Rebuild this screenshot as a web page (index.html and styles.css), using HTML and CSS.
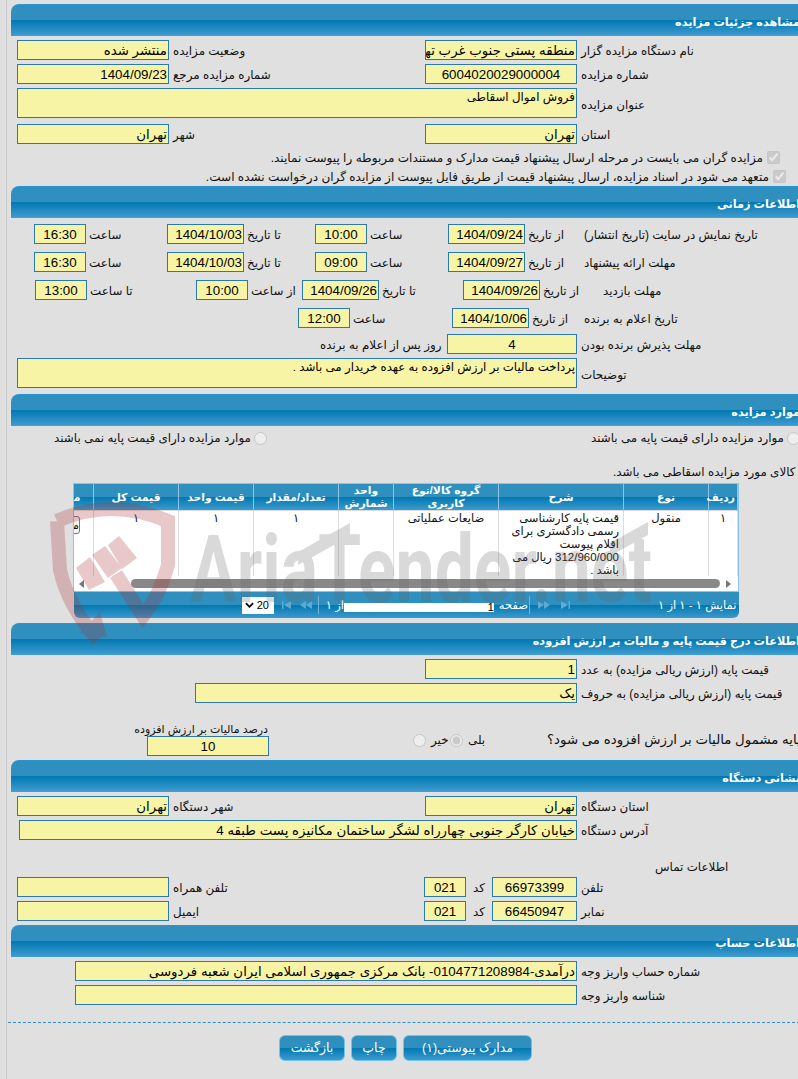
FILE: index.html
```html
<!DOCTYPE html>
<html lang="fa">
<head>
<meta charset="utf-8">
<title>مشاهده جزئیات مزایده</title>
<link rel="stylesheet" href="styles.css">
</head>
<body>
<div class="page">
<div class="sheet">

<section>
  <h2 class="head">مشاهده جزئیات مزایده</h2>
  <div class="row cols">
    <div class="f">منتشر شده</div><div class="lb">وضعیت مزایده</div>
    <div class="f">منطقه پستی جنوب غرب تهران</div><div class="lb">نام دستگاه مزایده گزار</div>
  </div>
  <div class="row cols">
    <div class="f">1404/09/23</div><div class="lb">شماره مزایده مرجع</div>
    <div class="f c">6004020029000004</div><div class="lb">شماره مزایده</div>
  </div>
  <div class="row wide">
    <div class="f ta">فروش اموال اسقاطی</div><div class="lb">عنوان مزایده</div>
  </div>
  <div class="row cols r4">
    <div class="f">تهران</div><div class="lb">شهر</div>
    <div class="f">تهران</div><div class="lb">استان</div>
  </div>
  <div class="chk chk1"><input type="checkbox" checked disabled><span>مزایده گران می بایست در مرحله ارسال پیشنهاد قیمت مدارک و مستندات مربوطه را پیوست نمایند.</span></div>
  <div class="chk chk2"><input type="checkbox" checked disabled><span>متعهد می شود در اسناد مزایده، ارسال پیشنهاد قیمت از طریق فایل پیوست از مزایده گران درخواست نشده است.</span></div>
</section>

<section class="s2">
  <h2 class="head">اطلاعات زمانی</h2>
  <div class="row t1">
    <div class="f c">16:30</div><div class="lb">ساعت</div>
    <div class="f">1404/10/03</div><div class="lb">تا تاریخ</div>
    <div class="f c">10:00</div><div class="lb">ساعت</div>
    <div class="f">1404/09/24</div><div class="lb">از تاریخ</div>
    <div class="lb">تاریخ نمایش در سایت (تاریخ انتشار)</div>
  </div>
  <div class="row t1 g8">
    <div class="f c">16:30</div><div class="lb">ساعت</div>
    <div class="f">1404/10/03</div><div class="lb">تا تاریخ</div>
    <div class="f c">09:00</div><div class="lb">ساعت</div>
    <div class="f">1404/09/27</div><div class="lb">از تاریخ</div>
    <div class="lb">مهلت ارائه پیشنهاد</div>
  </div>
  <div class="row t3 g8">
    <div class="f c">13:00</div><div class="lb">تا ساعت</div>
    <div class="f c">10:00</div><div class="lb">از ساعت</div>
    <div class="f">1404/09/26</div><div class="lb">تا تاریخ</div>
    <div class="f">1404/09/26</div><div class="lb">از تاریخ</div>
    <div class="lb">مهلت بازدید</div>
  </div>
  <div class="row t4 g8">
    <div class="f c">12:00</div><div class="lb">ساعت</div>
    <div class="f">1404/10/06</div><div class="lb">از تاریخ</div>
    <div class="lb">تاریخ اعلام به برنده</div>
  </div>
  <div class="row t5">
    <div class="lb">روز پس از اعلام به برنده</div>
    <div class="f c">4</div>
    <div class="lb">مهلت پذیرش برنده بودن</div>
  </div>
  <div class="row wide g4">
    <div class="f ta">پرداخت مالیات بر ارزش افزوده به عهده خریدار می باشد .</div><div class="lb">توضیحات</div>
  </div>
</section>

<section>
  <h2 class="head">موارد مزایده</h2>
  <div class="radios">
    <label class="opt"><input type="radio" disabled><span>موارد مزایده دارای قیمت پایه نمی باشند</span></label>
    <label class="opt"><input type="radio" disabled><span>موارد مزایده دارای قیمت پایه می باشند</span></label>
  </div>
  <p class="note">کالای مورد مزایده اسقاطی می باشد.</p>
  <div class="grid">
    <div class="gridclip">
      <table>
        <colgroup>
          <col class="w29"><col class="w85"><col class="w125"><col class="w105"><col class="w55"><col class="w85"><col class="w75"><col class="w85"><col class="w60">
        </colgroup>
        <thead>
          <tr><th>ردیف</th><th>نوع</th><th>شرح</th><th>گروه کالا/نوع کاربری</th><th>واحد شمارش</th><th>تعداد/مقدار</th><th>قیمت واحد</th><th>قیمت کل</th><th>مدارک</th></tr>
        </thead>
        <tbody>
          <tr>
            <td>۱</td><td>منقول</td>
            <td class="desc">قیمت پایه کارشناسی رسمی دادگستری برای اقلام پیوست 312/960/000 ریال می باشد .</td>
            <td>ضایعات عملیاتی</td><td></td><td>۱</td><td>۱</td><td>۱</td>
            <td class="docs"><span class="docbtn">مدارک</span></td>
          </tr>
        </tbody>
      </table>
    </div>
    <div class="scroll">
      <span class="arr arr-l"></span><span class="thumb"></span><span class="arr arr-r"></span>
    </div>
  </div>
  <div class="pager">
    <div class="p-select"><svg class="chev" viewBox="0 0 10 6" aria-hidden="true"><path d="M1 1l4 4 4-4"/></svg><span>20</span></div>
    <div class="p-icons p-i1">
      <svg viewBox="0 0 10 8" aria-hidden="true"><path d="M0 0h1.500v8H0zM2 4l7-4v8z"/></svg>
      <svg class="dbl" viewBox="0 0 12 8" aria-hidden="true"><path d="M0 4l6-4v8zM6 4l6-4v8z"/></svg>
    </div>
    <i class="sep sep1"></i>
    <span class="p-of">از ۱</span>
    <div class="p-input">1</div>
    <span class="p-page">صفحه</span>
    <i class="sep sep2"></i>
    <div class="p-icons p-i2">
      <svg class="dbl" viewBox="0 0 12 8" aria-hidden="true"><path d="M6 4L0 0v8zM12 4L6 0v8z"/></svg>
      <svg viewBox="0 0 10 8" aria-hidden="true"><path d="M8 4L1 0v8zM8.500 0H10v8H8.500z"/></svg>
    </div>
    <span class="p-info">نمایش ۱ - ۱ از ۱</span>
  </div>
</section>

<section class="s4">
  <h2 class="head">اطلاعات درج قیمت پایه و مالیات بر ارزش افزوده</h2>
  <div class="row base1">
    <div class="f">1</div><div class="lb">قیمت پایه (ارزش ریالی مزایده) به عدد</div>
  </div>
  <div class="row base2">
    <div class="f">یک</div><div class="lb">قیمت پایه (ارزش ریالی مزایده) به حروف</div>
  </div>
  <div class="tax">
    <div class="taxcol">
      <div class="taxlb">درصد مالیات بر ارزش افزوده</div>
      <div class="f c">10</div>
    </div>
    <div class="yn">
      <input type="radio" disabled><span class="no">خیر</span>
      <input type="radio" checked disabled><span class="yes">بلی</span>
    </div>
    <div class="taxq">قیمت پایه مشمول مالیات بر ارزش افزوده می شود؟</div>
  </div>
</section>

<section>
  <h2 class="head">نشانی دستگاه</h2>
  <div class="row cols">
    <div class="f">تهران</div><div class="lb">شهر دستگاه</div>
    <div class="f">تهران</div><div class="lb">استان دستگاه</div>
  </div>
  <div class="row addr">
    <div class="f">خیابان کارگر جنوبی چهارراه لشگر ساختمان مکانیزه پست طبقه 4</div><div class="lb">آدرس دستگاه</div>
  </div>
  <div class="contact">اطلاعات تماس</div>
  <div class="row tel">
    <div class="f"></div><div class="lb">تلفن همراه</div>
    <div class="f c">021</div><div class="lb">کد</div>
    <div class="f c">66973399</div><div class="lb">تلفن</div>
  </div>
  <div class="row tel">
    <div class="f"></div><div class="lb">ایمیل</div>
    <div class="f c">021</div><div class="lb">کد</div>
    <div class="f c">66450947</div><div class="lb">نمابر</div>
  </div>
</section>

<section>
  <h2 class="head">اطلاعات حساب</h2>
  <div class="row acc">
    <div class="f">درآمدی-0104771208984- بانک مرکزی جمهوری اسلامی ایران شعبه فردوسی</div><div class="lb">شماره حساب واریز وجه</div>
  </div>
  <div class="row acc">
    <div class="f"></div><div class="lb">شناسه واریز وجه</div>
  </div>
</section>

<div class="actions">
  <a class="btn b1">بازگشت</a>
  <a class="btn b2">چاپ</a>
  <a class="btn b3">مدارک پیوستی(۱)</a>
</div>

</div>

<svg class="wm" viewBox="0 0 798 1079" aria-hidden="true">
  <g class="wm-red">
    <path class="wm-line" d="M57 521Q110 497 168 521V565Q160 595 143 616L116 574M57 521L60 570Q68 606 98 640"/>
    <path class="wm-fill" d="M80 633L107 637L100 612ZM76 568L90 557L105 582L89 590ZM92 555L105 546L122 568L108 578ZM108 545L119 536L137 558L122 569Z"/>
  </g>
  <g class="wm-grey">
    <text class="wm-text" x="190" y="602" textLength="462" lengthAdjust="spacingAndGlyphs">AriaTender.net</text>
    <path class="wm-bar" d="M298 552L350 523V536L298 565ZM610 543L648 522V535L610 556Z"/>
  </g>
</svg>
</div>
</body>
</html>
```
FILE: styles.css
```css
* { box-sizing: border-box; }
html, body { margin: 0; padding: 0; height: 100%; background: #e0e0e0; }
body { overflow: hidden; font-family: "Liberation Sans", "DejaVu Sans", sans-serif; font-size: 11.9px; color: #111; }

.page { position: relative; width: 798px; height: 1079px; overflow: hidden; background: #e0e0e0; }
.page::before { content: ""; position: absolute; left: 6px; top: 0; bottom: 0; width: 1px; background: #c9c9c9; }
.sheet { width: 815px; padding-top: 4px; }

.head {
  height: 32px; margin: 0 0 4px 11px; padding: 9px 15px 0 0;
  direction: rtl; font-size: 11.3px; font-weight: bold; line-height: 16px; color: #fff;
  border-radius: 8px 0 0 0;
  border-top: 1px solid #2a93d2; border-bottom: 1px solid #3d9fd8;
  background: linear-gradient(#2f8fbf 0, #2f8fbf 50%, #0078b0 50%, #3c9ace 100%);
}

.row { display: grid; padding-left: 17px; }
.f {
  height: 20px; padding: 0 1px; border: 1px solid #2a7aad; background: #f7f5a5;
  direction: rtl; text-align: right; white-space: nowrap; overflow: hidden;
  font-size: 13.33px; line-height: 19px; color: #000;
}
.f.c { text-align: center; }
.f.ta { height: 30px; font-size: 11.8px; line-height: 16px; }
.lb { direction: rtl; text-align: left; padding: 2px 0 0 4px; white-space: nowrap; line-height: 18px; }

.cols { grid-template-columns: 152px 256px 152px 1fr; margin-bottom: 4px; }
.cols.r4 { margin-top: 6px; margin-bottom: 4px; }
.wide { grid-template-columns: 560px 1fr; }
.wide .lb { padding-top: 8px; }

.chk { display: flex; direction: rtl; align-items: center; height: 19px; white-space: nowrap; font-size: 12.05px; }
.chk input { margin: 0 0 0 4px; width: 13px; height: 13px; }
.chk1 { padding-right: 35px; }
.chk2 { padding-right: 29px; }

.s2 .head { margin-bottom: 6px; }
.s2 { padding-bottom: 6px; }
.t1 { grid-template-columns: 52px 81px 77px 71px 52px 81px 77px 56px 1fr; padding-left: 34px; }
.t3 { grid-template-columns: 52px 109px 52px 54px 77px 84px 77px 60px 1fr; padding-left: 35px; }
.t4 { grid-template-columns: 52px 102px 77px 52px 1fr; padding-left: 298px; }
.t5 { grid-template-columns: 127px 130px 1fr; padding-left: 320px; margin-top: 6px; }
.t5 .lb:first-child { padding-left: 0; }
.g8 { margin-top: 8px; }
.g4 { margin-top: 4px; }
.t1 .lb, .t3 .lb, .t4 .lb { padding-left: 3px; }

.radios { display: flex; justify-content: space-between; padding: 0 15px 0 54px; height: 16px; width: 815px; }
.opt { display: flex; direction: rtl; align-items: center; white-space: nowrap; }
.opt input { margin: 0 0 0 3px; width: 13px; height: 13px; }
.note { margin: 17px 0 0; height: 18px; direction: rtl; line-height: 18px; text-align: left; padding-left: 613px; white-space: nowrap; }

.grid { margin: 2px 0 0 73px; width: 666px; height: 109px; border: 1px solid #8cc4ea; background: #fff; direction: rtl; }
.gridclip { height: 92px; overflow: hidden; }
table { table-layout: fixed; width: 704px; border-collapse: collapse; direction: rtl; }
.w29 { width: 29px; } .w85 { width: 85px; } .w125 { width: 125px; } .w105 { width: 105px; }
.w55 { width: 55px; } .w75 { width: 75px; } .w60 { width: 60px; }
th {
  height: 26px; padding: 0 2px; color: #fff; font-size: 10.8px; font-weight: bold; line-height: 13px; text-align: center;
  border-left: 1px solid #8cc4ea; border-right: 1px solid #8cc4ea;
  background: linear-gradient(#2f8fbf 0, #2f8fbf 50%, #0078b0 50%, #3c9ace 100%);
}
td { height: 66px; padding: 1px 2px 0; vertical-align: top; text-align: center; font-size: 11.5px; line-height: 13px; border: 1px solid #dcdcdc; }
td.desc { text-align: right; padding: 1px 4px 0 2px; }
td.docs { text-align: left; padding: 5px 0 0; }
.docbtn { display: inline-block; width: 46px; height: 18px; border: 1px solid #777; border-radius: 3px; background: #f4f4f4; font-size: 11px; line-height: 16px; text-align: right; }

.scroll { display: flex; direction: ltr; align-items: center; height: 15px; padding: 0 5px; }
.arr { width: 0; height: 0; border-top: 4px solid transparent; border-bottom: 4px solid transparent; }
.arr-l { border-right: 5px solid #777; }
.arr-r { border-left: 5px solid #777; margin-left: 6px; }
.thumb { width: 589px; height: 9px; margin-left: 47px; border-radius: 5px; background: #888; }

.pager {
  display: flex; align-items: center; direction: ltr; height: 26px; margin-left: 74px; width: 665px; color: #fff; padding-left: 168px;
  border-radius: 0 0 6px 6px; font-size: 11.5px; white-space: nowrap;
  background: linear-gradient(#2f8fbf 0, #2f8fbf 50%, #0078b0 50%, #3c9ace 100%);
}
.p-select { position: absolute; left: 242px; display: flex; justify-content: space-between; align-items: center; width: 32px; height: 17px; padding: 0 5px 0 3px; background: #fff; color: #000; font-size: 11px; }
.chev { width: 9px; height: 6px; fill: none; stroke: #000; stroke-width: 2; }
.p-icons { display: flex; align-items: center; gap: 8px; }
.p-icons svg { width: 10px; height: 8px; fill: #5fa9d2; }
.p-icons svg.dbl { width: 12px; }
.p-i1 { margin-left: 40px; }
.sep { width: 1px; height: 18px; background: #6fb2d8; }
.sep1 { margin: 0 4px 0 6px; }
.sep2 { margin: 0 8px 0 1px; }
.p-of { direction: rtl; width: 21px; }
.p-input { width: 150px; height: 9px; margin-top: 5px; background: #fff; color: #000; text-align: right; line-height: 9px; }
.p-page { direction: rtl; margin-left: 4px; width: 30px; }
.p-i2 { gap: 10px; }
.p-info { direction: rtl; margin-left: 88px; }

.s4 { margin-top: 5px; }
.base1 { grid-template-columns: 152px 1fr; padding-left: 425px; margin-bottom: 4px; }
.base2 { grid-template-columns: 382px 1fr; padding-left: 195px; }
.tax { display: flex; direction: ltr; height: 56px; padding-left: 134px; align-items: flex-start; margin-top: 1px; white-space: nowrap; }
.taxcol { width: 135px; padding-top: 19px; }
.taxlb { direction: rtl; height: 13px; line-height: 13px; font-size: 11px; text-align: right; padding-right: 1px; }
.taxcol .f { width: 122px; margin-left: 13px; }
.yn { display: flex; align-items: center; margin: 29px 0 0 144px; }
.yn input { margin: 0; width: 13px; height: 13px; }
.yn span { width: 24px; padding-left: 5px; direction: rtl; text-align: left; }
.taxq { direction: rtl; margin: 28px 0 0 60px; font-size: 13.33px; }

.addr { grid-template-columns: 558px 1fr; padding-left: 19px; }
.contact { direction: rtl; text-align: left; padding-left: 655px; margin-top: 18px; height: 19px; line-height: 18px; white-space: nowrap; }
.tel { grid-template-columns: 152px 255px 42px 26px 85px 1fr; margin-bottom: 4px; }
.tel .lb:nth-child(4) { padding-left: 0; text-align: center; }

.acc { grid-template-columns: 502px 1fr; padding-left: 75px; margin-bottom: 4px; }

.actions { margin: 17px 0 0 8px; padding: 12px 0 0 271px; border-top: 1px dashed #2f8fbf; display: flex; direction: ltr; gap: 6px; }
.btn {
  display: block; height: 26px; color: #fff; text-align: center; font-size: 12.5px; line-height: 24px; direction: rtl;
  border: 1px solid #6fc3ea; border-radius: 6px;
  background: linear-gradient(#2f8fbf 0, #2f8fbf 50%, #0078b0 50%, #3c9ace 100%);
}
.b1 { width: 66px; } .b2 { width: 46px; } .b3 { width: 129px; }

.wm { position: absolute; left: 0; top: 0; width: 798px; height: 1079px; pointer-events: none; }
.wm-red { opacity: .26; }
.wm-line { fill: none; stroke: #a83030; stroke-width: 14; }
.wm-fill { fill: #a83030; }
.wm-grey { opacity: .24; }
.wm-text { font-family: Roboto, "Liberation Sans", sans-serif; font-weight: 700; font-size: 94px; fill: #666; }
.wm-bar { fill: #666; }
```
